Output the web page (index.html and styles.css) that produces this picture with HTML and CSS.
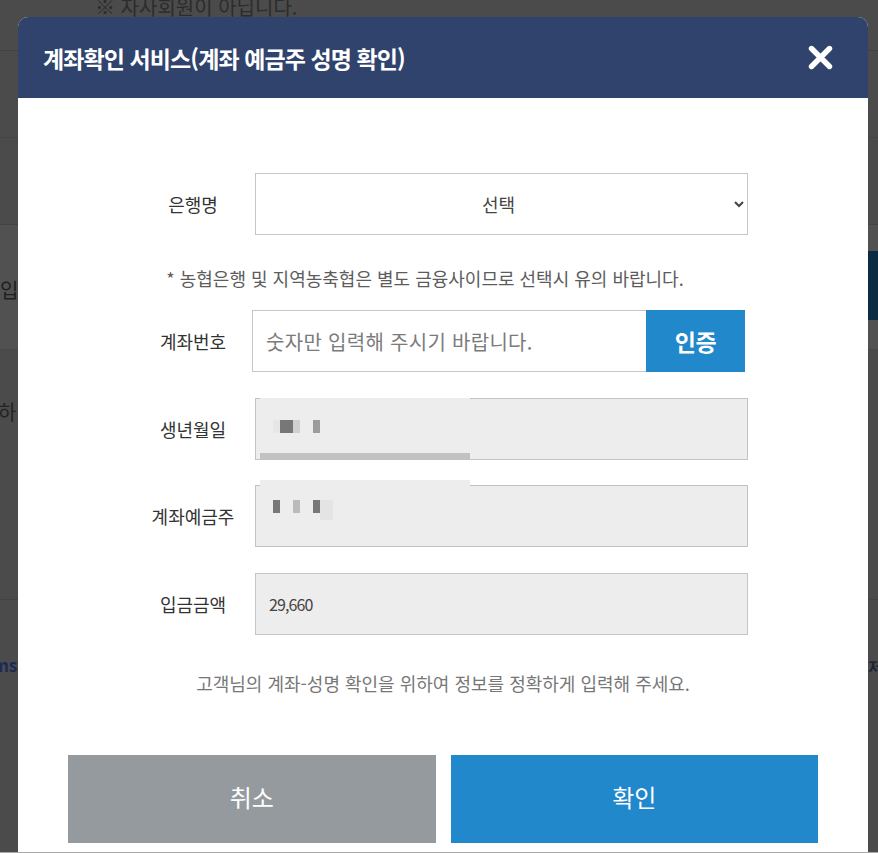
FILE: index.html
```html
<!DOCTYPE html>
<html lang="ko">
<head>
<meta charset="utf-8">
<title>계좌확인 서비스</title>
<link rel="stylesheet" href="styles.css">
</head>
<body>
<div class="page">
  <div class="pg-top"><span class="pg-notice">※ 자사회원이 아닙니다.</span></div>
  <div class="pg-row"></div>
  <div class="pg-row"></div>
  <div class="pg-band"><span class="pg-label">입금</span><span class="pg-btn"></span></div>
  <div class="pg-body"><span class="pg-text">하기</span></div>
  <div class="pg-foot"><span class="pg-link">sms</span><span class="pg-right">l저</span></div>
</div>

<div class="modal">
  <div class="modal-head">
    <h2 class="modal-title">계좌확인 서비스(계좌 예금주 성명 확인)</h2>
    <button class="close" type="button" aria-label="닫기">
      <svg width="25" height="25" viewBox="0 0 25 25"><path d="M3.5 3.5 L21.5 21.5 M21.5 3.5 L3.5 21.5" stroke="#fff" stroke-width="5.4" stroke-linecap="round" fill="none"/></svg>
    </button>
  </div>
  <div class="modal-body">
    <div class="row">
      <label class="row-label">은행명</label>
      <select class="field select"><option>선택</option></select>
    </div>
    <p class="note">* 농협은행 및 지역농축협은 별도 금융사이므로 선택시 유의 바랍니다.</p>
    <div class="row">
      <label class="row-label">계좌번호</label>
      <div class="acct">
        <input class="acct-input" type="text" placeholder="숫자만 입력해 주시기 바랍니다.">
        <button class="acct-btn" type="button">인증</button>
      </div>
    </div>
    <div class="row row-birth">
      <label class="row-label">생년월일</label>
      <div class="masked">
        <div class="box"></div>
        <div class="cover cover-birth">
          <span class="px w7 c1"></span><span class="px w13 c2"></span><span class="px w7 c3"></span><span class="px w13"></span><span class="px w7 c4"></span>
        </div>
      </div>
    </div>
    <div class="row row-holder">
      <label class="row-label">계좌예금주</label>
      <div class="masked">
        <div class="box"></div>
        <div class="cover cover-holder">
          <span class="px w7 c2"></span><span class="px w13"></span><span class="px w7 c5"></span><span class="px w13"></span><span class="px w7 c2"></span><span class="px w13 c6 tall"></span>
        </div>
      </div>
    </div>
    <div class="row row-amount">
      <label class="row-label">입금금액</label>
      <div class="field amount">29,660</div>
    </div>
    <p class="info">고객님의 계좌-성명 확인을 위하여 정보를 정확하게 입력해 주세요.</p>
    <div class="actions">
      <button class="btn btn-cancel" type="button">취소</button>
      <button class="btn btn-ok" type="button">확인</button>
    </div>
  </div>
</div>
<div class="edge"></div>
</body>
</html>
```

FILE: styles.css
```css
html, body {
  margin: 0;
  padding: 0;
}
body {
  background: #4b4b4b;
  font-family: "Noto Sans CJK KR", "Noto Sans", sans-serif;
  width: 878px;
  height: 853px;
  overflow: hidden;
}

/* dimmed page behind the dialog */
.page {
  width: 878px;
}
.pg-top {
  height: 50px;
  border-bottom: 1px solid #424242;
  padding-left: 95px;
  overflow: hidden;
}
.pg-notice {
  display: block;
  margin-top: -8px;
  font-size: 20px;
  line-height: 30px;
  color: #2c2c2c;
}
.pg-row {
  height: 86px;
  border-bottom: 1px solid #444;
}
.pg-band {
  height: 124px;
  background: #515151;
  border-bottom: 1px solid #474747;
  display: flex;
  justify-content: space-between;
}
.pg-label {
  font-size: 20px;
  color: #202020;
  margin-top: 52px;
  line-height: 26px;
  margin-left: 0;
}
.pg-btn {
  width: 60px;
  height: 69px;
  margin-top: 26px;
  background: #0c2c43;
}
.pg-body {
  height: 249px;
  border-bottom: 1px solid #444;
  padding-left: 0;
}
.pg-text {
  display: inline-block;
  margin-top: 47px;
  margin-left: -2px;
  font-size: 20px;
  color: #232323;
}
.pg-foot {
  height: 250px;
  display: flex;
  justify-content: space-between;
}
.pg-link {
  margin-top: 53px;
  margin-left: -16px;
  font-size: 17px;
  font-weight: bold;
  color: #1c2a56;
  line-height: 24px;
  height: 24px;
}
.pg-right {
  margin-top: 55px;
  margin-right: -4px;
  font-size: 15px;
  font-weight: bold;
  color: #1c2233;
  line-height: 24px;
  height: 24px;
}

/* dialog */
.modal {
  position: fixed;
  left: 18px;
  top: 17px;
  width: 850px;
  height: 840px;
  background: #fff;
  border-radius: 10px 10px 0 0;
  overflow: hidden;
}
.modal-head {
  height: 81px;
  background: #2f436d;
  display: flex;
  align-items: center;
  justify-content: space-between;
  padding: 0 35px 0 25px;
}
.modal-title {
  margin: 0;
  color: #fff;
  font-size: 23px;
  font-weight: bold;
  letter-spacing: -0.9px;
  line-height: 30px;
}
.close {
  border: 0;
  padding: 0;
  margin: 0;
  background: none;
  width: 25px;
  height: 25px;
  display: flex;
  margin-top: -1px;
}

.modal-body {
  padding-top: 75px;
}
.row {
  display: flex;
  align-items: center;
  padding-left: 113px;
  height: 62px;
}
.row-label {
  width: 124px;
  flex: none;
  text-align: center;
  font-size: 18px;
  color: #333;
}
.field {
  box-sizing: border-box;
  width: 493px;
  height: 62px;
  border: 1px solid #c6c6c6;
  font-family: inherit;
}
.select {
  background: #fff;
  font-size: 18px;
  color: #444;
  text-align: center;
  text-align-last: center;
  padding: 0 4px 0 10px;
  border-radius: 0;
}
.note {
  margin: 31px 0 20px;
  padding-right: 36px;
  text-align: center;
  font-size: 18px;
  line-height: 24px;
  color: #5c5c5c;
}
.acct {
  display: flex;
  margin-left: -3px;
  width: 493px;
  height: 62px;
}
.acct-input {
  box-sizing: border-box;
  width: 394px;
  height: 62px;
  border: 1px solid #c6c6c6;
  border-right: 0;
  padding: 0 0 0 13px;
  font-family: inherit;
  font-size: 20px;
  letter-spacing: 0.3px;
  color: #333;
  outline: none;
}
.acct-input::placeholder {
  color: #7b7b7b;
}
.acct-btn {
  width: 99px;
  height: 62px;
  border: 0;
  background: #2188cc;
  color: #fff;
  font-family: inherit;
  font-size: 23px;
  font-weight: bold;
  letter-spacing: -0.5px;
  padding: 0;
}

.row-birth {
  margin-top: 26px;
}
.row-holder {
  margin-top: 25px;
}
.masked {
  position: relative;
  width: 493px;
  height: 62px;
}
.box {
  box-sizing: border-box;
  height: 62px;
  border: 1px solid #c3c3c3;
  background: #ededed;
}
.cover {
  position: absolute;
  left: 5px;
  width: 210px;
  background: #ededed;
  display: flex;
  align-items: flex-start;
  box-sizing: border-box;
  padding-left: 13px;
}
.cover-birth {
  top: 0;
  height: 62px;
  padding-top: 22px;
  border-bottom: 7px solid #c2c2c2;
}
.cover-holder {
  top: -5px;
  height: 60px;
  padding-top: 20px;
}
.px {
  display: block;
  height: 13px;
  flex: none;
}
.px.tall { height: 20px; }
.w7 { width: 7px; }
.w13 { width: 13px; }
.c1 { background: #e6e6e6; }
.c2 { background: #777; }
.c3 { background: #d0d0d0; }
.c4 { background: #9c9c9c; }
.c5 { background: #bbb; }
.c6 { background: #e4e4e4; }

.row-amount {
  margin-top: 26px;
}
.amount {
  background: #ededed;
  display: flex;
  align-items: center;
  padding-left: 13px;
  font-size: 16px;
  color: #444;
  letter-spacing: -0.9px;
}
.info {
  margin: 36px 0 0;
  text-align: center;
  font-size: 18px;
  line-height: 24px;
  color: #777;
}
.actions {
  display: flex;
  gap: 15px;
  padding: 0 50px;
  margin-top: 60px;
}
.btn {
  flex: 1;
  height: 88px;
  border: 0;
  color: #fff;
  font-family: inherit;
  font-size: 24px;
  padding: 0 0 6px;
}
.btn-cancel { background: #959a9e; }
.btn-ok { background: #2188cc; }

.edge {
  position: fixed;
  left: 0;
  right: 0;
  bottom: 0;
  height: 1px;
  background: #a8a8a8;
}
```
